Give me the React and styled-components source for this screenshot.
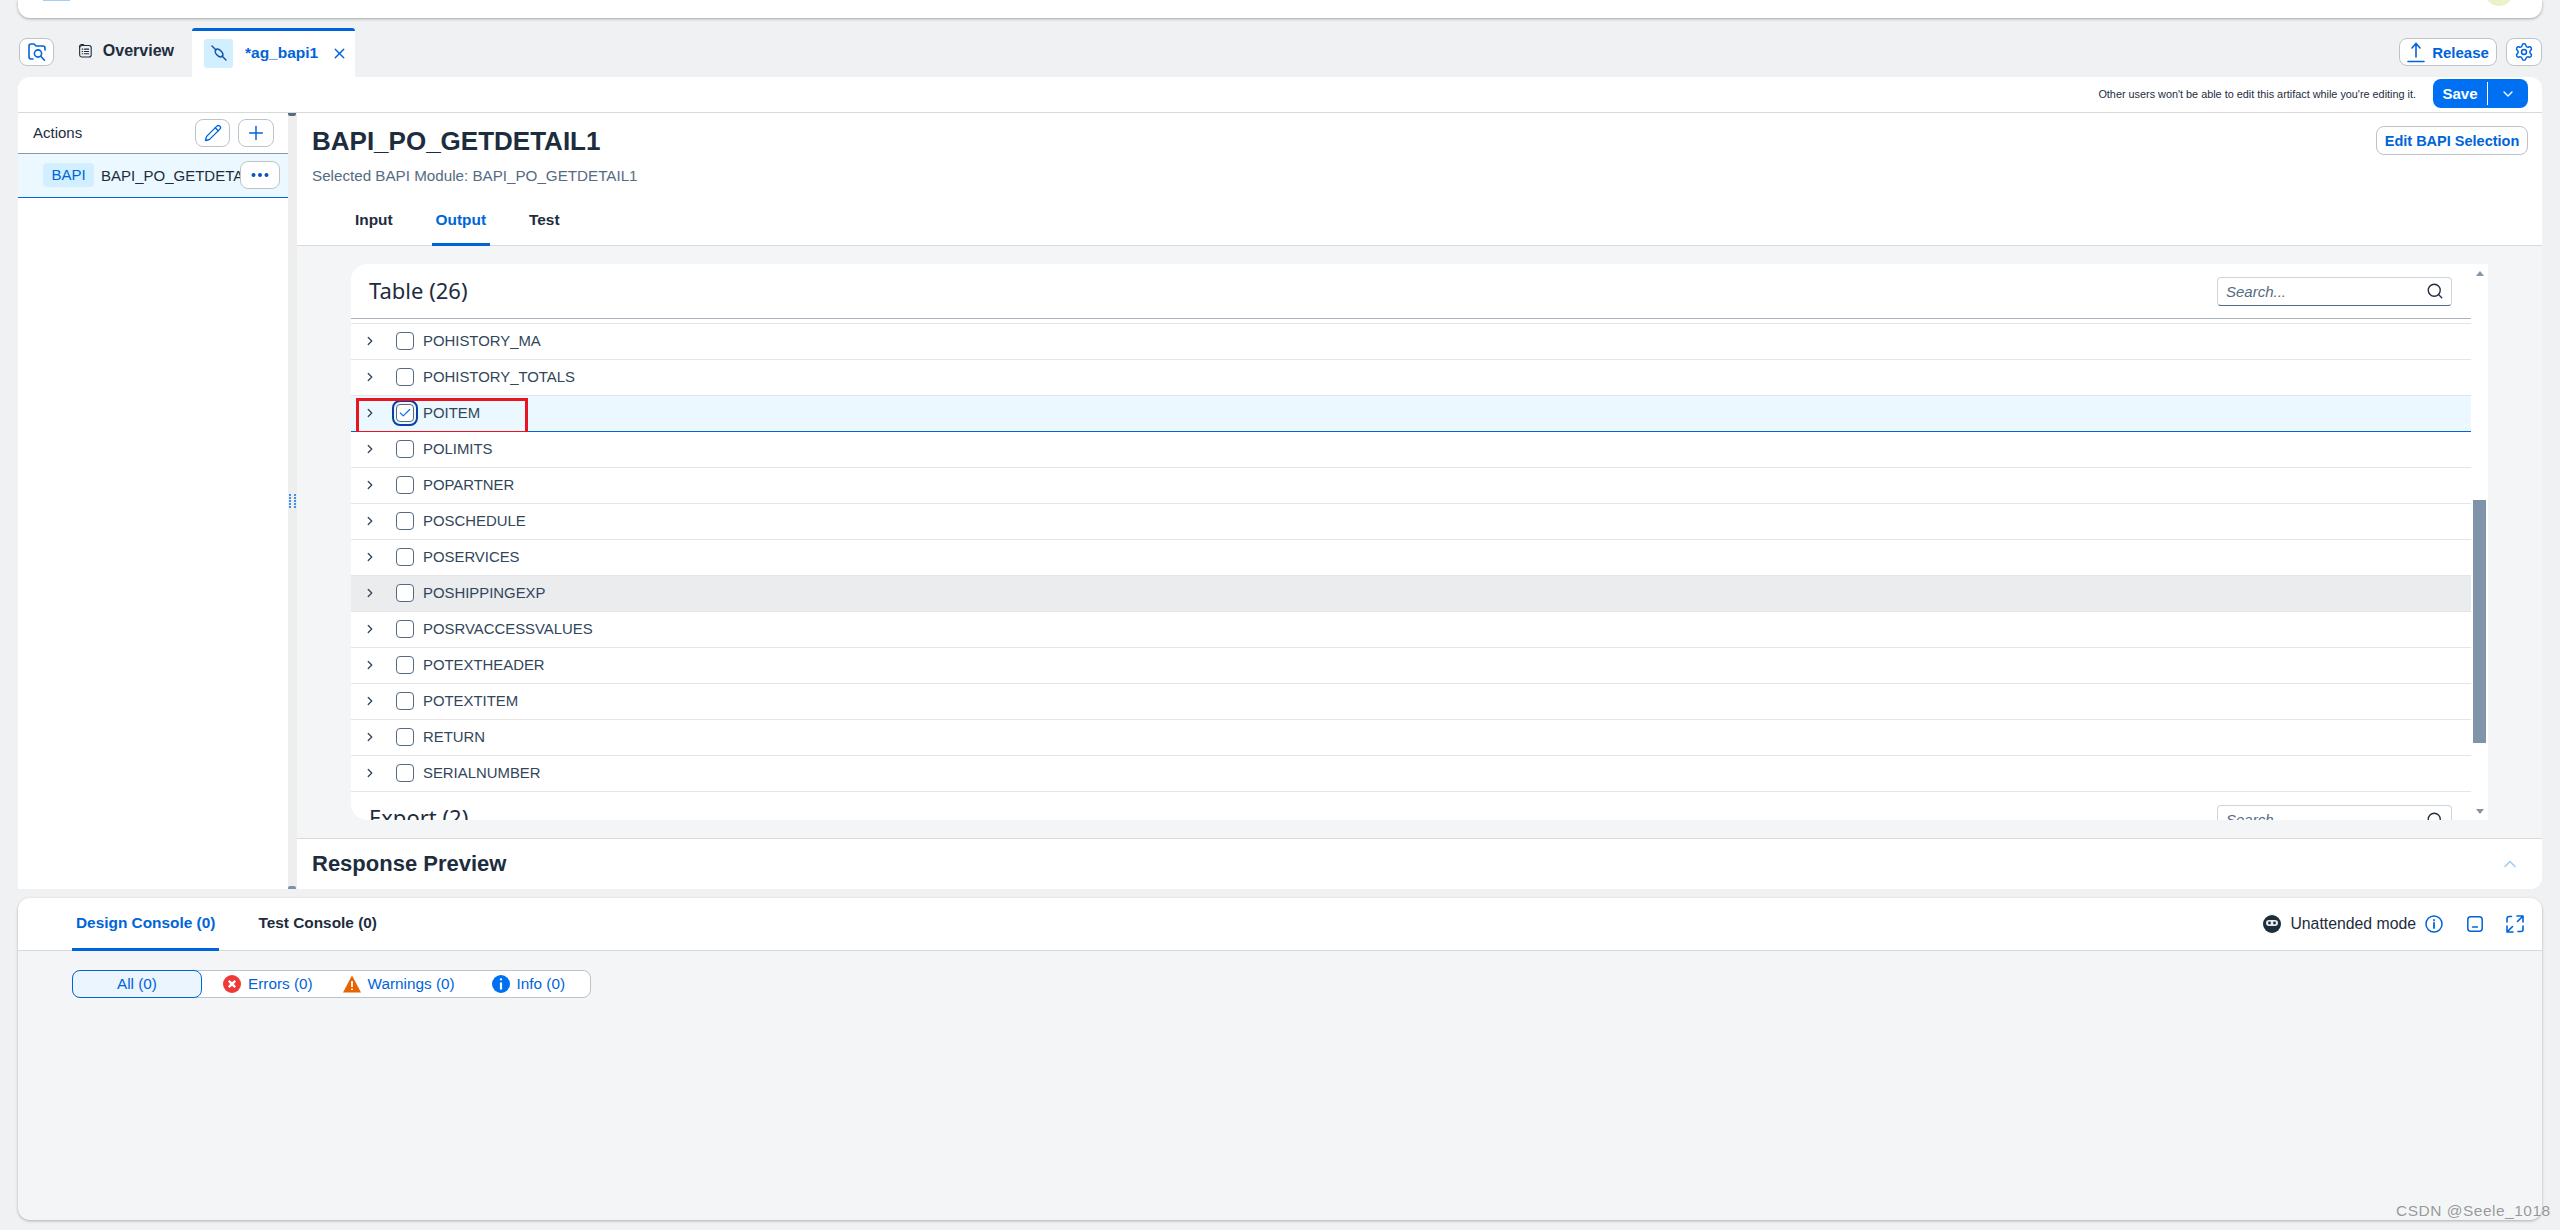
import React from 'react';
import styled, { createGlobalStyle } from 'styled-components';
import { ChevronDown, ChevronRight, ChevronUp, Check, Pencil, Plus, Search, Settings, X } from 'lucide-react';

const GlobalStyle = createGlobalStyle`
  html, body {
    margin: 0;
    padding: 0;
    overflow: hidden;
    background: #eff1f2;
  }
  * {
    box-sizing: border-box;
  }
`;

const Page = styled.div`
  position: relative;
  display: flex;
  flex-direction: column;
  width: 2560px;
  height: 1230px;
  padding: 0 18px;
  font-family: "Liberation Sans", Arial, sans-serif;
  color: #1d2d3e;
`;

const Shell = styled.div`
  position: relative;
  flex: none;
  height: 18px;
  background: #fff;
  border-radius: 0 0 12px 12px;
  box-shadow: 0 1px 3px rgba(0, 0, 0, 0.32);
  overflow: hidden;
`;

const ShellLogo = styled.div`
  position: absolute;
  left: 25px;
  top: 0;
  width: 27px;
  height: 1px;
  background: #a8cdf0;
`;

const ShellAvatar = styled.div`
  position: absolute;
  left: 2467px;
  top: -22px;
  width: 28px;
  height: 28px;
  border-radius: 50%;
  background: #eaf3c8;
`;

const TabRow = styled.div`
  flex: none;
  display: flex;
  align-items: flex-end;
  height: 59px;
  padding-left: 1px;
`;

const IconButton = styled.button`
  display: flex;
  align-items: center;
  justify-content: center;
  gap: ${(p) => (p.$gap ? `${p.$gap}px` : '0')};
  width: ${(p) => (p.$width ? `${p.$width}px` : 'auto')};
  height: ${(p) => (p.$tall ? '29px' : '28px')};
  padding: 0;
  background: #fff;
  border: 1px solid #bcc3ca;
  border-radius: 8px;
  color: #0064d9;
  font: 700 ${(p) => p.$font || 15}px "Liberation Sans", Arial, sans-serif;
`;

const TabRowButton = styled(IconButton)`
  margin-bottom: 11px;
`;

const OverviewTab = styled.div`
  display: flex;
  align-items: center;
  gap: 11px;
  height: 28px;
  width: 95px;
  margin: 0 18px 12px 25px;
  font-size: 16px;
  font-weight: 700;
`;

const ActiveTab = styled.div`
  display: flex;
  align-items: center;
  width: 163px;
  height: 49px;
  padding: 0 0 2px 12px;
  background: #fff;
  border-top: 3px solid #0064d9;
  border-radius: 3px 3px 0 0;
  color: #0064d9;
  font-size: 15.5px;
  font-weight: 700;
`;

const TabTile = styled.div`
  display: flex;
  align-items: center;
  justify-content: center;
  width: 29px;
  height: 29px;
  margin-right: 12px;
  background: #d1efff;
  border-radius: 3px;
`;

const TabName = styled.span`
  width: 86px;
`;

const TabRowEnd = styled.div`
  display: flex;
  gap: 9px;
  margin-left: auto;
`;

const Main = styled.div`
  flex: none;
  display: flex;
  flex-direction: column;
  height: 812px;
  background: #fff;
  border-radius: 12px 12px 12px 0;
  overflow: hidden;
`;

const Toolbar = styled.div`
  flex: none;
  display: flex;
  align-items: center;
  justify-content: flex-end;
  height: 36px;
  padding: 0 14px 2px 0;
  border-bottom: 1px solid #d9d9d9;
`;

const LockNote = styled.span`
  margin-right: 17px;
  font-size: 10.85px;
  color: #1d2d3e;
`;

const SaveButton = styled.div`
  display: flex;
  align-items: center;
  width: 95px;
  height: 29px;
  background: #0070f2;
  border-radius: 8px;
  color: #fff;
  font-size: 15px;
  font-weight: 700;
`;

const SaveLabel = styled.span`
  width: 55px;
  height: 23px;
  line-height: 23px;
  text-align: center;
  border-right: 1px solid #fff;
`;

const SaveCaret = styled.span`
  display: flex;
  flex: 1;
  justify-content: center;
`;

const Body = styled.div`
  flex: 1;
  display: flex;
  min-height: 0;
`;

const ActionsPanel = styled.div`
  flex: none;
  width: 270px;
`;

const ActionsHead = styled.div`
  display: flex;
  align-items: center;
  gap: 8px;
  height: 41px;
  padding: 0 14px 1px 15px;
  border-bottom: 1px solid #8b9aa9;
  font-size: 15px;
`;

const ActionsTitle = styled.span`
  margin-right: auto;
`;

const ActionItem = styled.div`
  position: relative;
  display: flex;
  align-items: center;
  height: 44px;
  padding: 0 0 1px 25px;
  background: #ebf8ff;
  border-bottom: 1px solid #0064d9;
  font-size: 15px;
  white-space: nowrap;
  overflow: hidden;
`;

const BapiTag = styled.span`
  flex: none;
  width: 51px;
  height: 24px;
  margin-right: 7px;
  line-height: 24px;
  text-align: center;
  background: #d1efff;
  border-radius: 4px;
  color: #0064d9;
`;

const MoreButton = styled(IconButton)`
  position: absolute;
  left: 222px;
  top: 7px;
  width: 40px;
`;

const Splitter = styled.div`
  position: relative;
  flex: none;
  display: flex;
  align-items: center;
  justify-content: center;
  width: 9px;
  background: #eeeeee;
`;

const SplitterCap = styled.div`
  position: absolute;
  left: 0;
  width: 8px;
  height: 3px;
  top: ${(p) => (p.$bottom ? 'auto' : '0')};
  bottom: ${(p) => (p.$bottom ? '0' : 'auto')};
  background: ${(p) => (p.$bottom ? '#7f90a8' : '#556b82')};
  border-radius: ${(p) => (p.$bottom ? '2px 2px 0 0' : '0 0 2px 2px')};
`;

const Workspace = styled.div`
  flex: 1;
  display: flex;
  flex-direction: column;
  min-width: 0;
`;

const DetailHead = styled.div`
  flex: none;
  display: flex;
  flex-direction: column;
  height: 133px;
  border-bottom: 1px solid #d9d9d9;
`;

const DetailTop = styled.div`
  display: flex;
  justify-content: space-between;
  align-items: flex-start;
  padding: 13px 14px 0 15px;
`;

const DetailTitle = styled.h1`
  margin: 0;
  font-size: 26px;
  line-height: 30px;
  font-weight: 700;
`;

const DetailSub = styled.div`
  margin-top: 10px;
  font-size: 15.2px;
  line-height: 20px;
  color: #556b82;
`;

const TabBar = styled.div`
  display: flex;
  gap: ${(p) => p.$gap}px;
  margin: auto 0 -1px 54px;
`;

const TabItem = styled.div`
  display: flex;
  align-items: center;
  height: ${(p) => p.$height}px;
  padding: 0 4px 2px;
  font-size: 15.4px;
  font-weight: 700;
  color: ${(p) => (p.$active ? '#0064d9' : '#1d2d3e')};
  border-bottom: 3px solid ${(p) => (p.$active ? '#0064d9' : 'transparent')};
`;

const Content = styled.div`
  flex: 1;
  display: flex;
  min-height: 0;
  padding: 18px 54px;
  background: #f3f5f6;
`;

const Card = styled.div`
  flex: 1;
  display: flex;
  min-width: 0;
  background: #fff;
  border-radius: 16px 0 0 16px;
  overflow: hidden;
`;

const CardList = styled.div`
  flex: 1;
  min-width: 0;
`;

const SectionHead = styled.div`
  display: flex;
  justify-content: space-between;
  height: ${(p) => (p.$first ? '55px' : '56px')};
  padding: ${(p) => (p.$first ? '0 19px 0 18px' : '13px 19px 0 18px')};
  align-items: ${(p) => (p.$first ? 'center' : 'flex-start')};
  border-bottom: ${(p) => (p.$first ? '1px solid #a9b4be' : 'none')};
`;

const SectionTitle = styled.span`
  font-family: "Noto Sans", sans-serif;
  font-size: 22px;
  margin-top: -3px;
`;

const SearchBox = styled.div`
  display: flex;
  align-items: center;
  justify-content: space-between;
  width: 235px;
  height: 29px;
  padding: 0 7px 0 8px;
  background: #fff;
  border: 1px solid #d0d5da;
  border-bottom: 1px solid #556b82;
  border-radius: 4px;
  font-size: 15px;
  font-style: italic;
  color: #556b82;
`;

const RowsTop = styled.div`
  height: 5px;
  border-bottom: 1px solid #e5e5e5;
`;

const Row = styled.div`
  position: relative;
  display: grid;
  grid-template-columns: 33px 27px 1fr;
  align-items: center;
  height: 36px;
  padding: 0 0 1px 12px;
  font-size: 14.9px;
  color: #32465a;
  background: ${(p) => (p.$selected ? '#ebf8ff' : p.$hover ? '#eaecee' : '#fff')};
  border-bottom: 1px solid ${(p) => (p.$selected ? '#0064d9' : '#e5e5e5')};
`;

const Checkbox = styled.span`
  position: relative;
  display: flex;
  align-items: center;
  justify-content: center;
  width: 18px;
  height: 18px;
  border: 1px solid #556b82;
  border-radius: 4px;
  background: #fff;
`;

const FocusRing = styled.span`
  position: absolute;
  left: -5px;
  top: -5px;
  width: 26px;
  height: 26px;
  border: 2px solid #0a3fa8;
  border-radius: 8px;
`;

const Highlight = styled.div`
  position: absolute;
  left: 5px;
  top: 2px;
  width: 172px;
  height: 36px;
  border: 3px solid #e8141f;
`;

const ScrollTrack = styled.div`
  flex: none;
  display: flex;
  flex-direction: column;
  align-items: center;
  width: 17px;
  padding: 7px 0 6px;
`;

const ScrollThumb = styled.div`
  width: 13px;
  height: 243px;
  margin-top: 224px;
  margin-bottom: auto;
  background: #7f93a9;
`;

const ArrowUp = styled.div`
  width: 0;
  height: 0;
  border-left: 4px solid transparent;
  border-right: 4px solid transparent;
  border-bottom: 5px solid #8396a8;
`;

const ArrowDown = styled(ArrowUp)`
  border-bottom: none;
  border-top: 5px solid #8396a8;
`;

const PreviewBar = styled.div`
  flex: none;
  display: flex;
  align-items: center;
  justify-content: space-between;
  height: 51px;
  padding: 0 22px 0 15px;
  background: #fff;
  border-top: 1px solid #d9d9d9;
`;

const PreviewTitle = styled.span`
  font-size: 22px;
  font-weight: 700;
`;

const Console = styled.div`
  flex: none;
  display: flex;
  flex-direction: column;
  height: 322px;
  margin-top: 9px;
  background: #f3f5f6;
  border-radius: 12px;
  box-shadow: 0 1px 3px rgba(0, 0, 0, 0.28);
  overflow: hidden;
`;

const ConsoleHead = styled.div`
  flex: none;
  display: flex;
  align-items: center;
  justify-content: space-between;
  height: 53px;
  padding-right: 18px;
  background: #fff;
  border-bottom: 1px solid #d9d9d9;
`;

const ConsoleTools = styled.div`
  display: flex;
  align-items: center;
  font-size: 15.8px;
`;

const ModeLabel = styled.span`
  margin: 0 9px;
`;

const MinIcon = styled.span`
  display: flex;
  margin: 0 23px 0 24px;
`;

const Segmented = styled.div`
  display: flex;
  align-items: center;
  width: 519px;
  height: 28px;
  margin: 19px 0 0 54px;
  background: #fff;
  border: 1px solid #bcc3ca;
  border-radius: 8px;
  color: #0064d9;
  font-size: 15.3px;
`;

const SegmentAll = styled.div`
  width: 130px;
  height: 28px;
  margin: -1px 0 -1px -1px;
  line-height: 26px;
  text-align: center;
  background: #ebf5fe;
  border: 1px solid #0064d9;
  border-radius: 8px;
`;

const SegmentItem = styled.div`
  display: flex;
  align-items: center;
  gap: 7px;
  margin-left: ${(p) => p.$left}px;
`;

const Watermark = styled.div`
  position: absolute;
  left: 2396px;
  top: 1202px;
  font-size: 15.5px;
  letter-spacing: 0.5px;
  color: rgba(90, 90, 90, 0.6);
`;

const FolderSearchIcon = () => (
  <svg width="18" height="20" viewBox="0 0 18 20" fill="none" stroke="#0064d9" strokeWidth="1.6" strokeLinecap="round" strokeLinejoin="round">
    <path d="M5 17H3a2 2 0 0 1-2-2V4a2 2 0 0 1 2-2h3l2 2h7a2 2 0 0 1 2 2v2" />
    <circle cx="10" cy="11.5" r="3.6" />
    <path d="M12.8 14.3L16.5 18.2" />
  </svg>
);

const OverviewIcon = () => (
  <svg width="14" height="16" viewBox="0 0 14 16" fill="none" stroke="#1d2d3e" strokeWidth="1.2" strokeLinecap="round">
    <rect x="0.7" y="2" width="12.6" height="12.6" rx="2.5" />
    <path d="M0.7 4.5V3a2 2 0 0 1 2-2h2l1 1" />
    <path d="M3.5 6h.6M6 6h4.5M3.5 8.5h.6M6 8.5h4.5M3.5 11h.6M6 11h4.5" />
  </svg>
);

const ConnectorIcon = () => (
  <svg width="18" height="18" viewBox="0 0 18 18" fill="none" stroke="#0a4fa8" strokeWidth="1.4" strokeLinecap="round">
    <path d="M2 2L6 6M12 12L16 16" />
    <ellipse cx="9" cy="9" rx="4.6" ry="2.8" transform="rotate(45 9 9)" />
  </svg>
);

const ReleaseIcon = () => (
  <svg width="18" height="21" viewBox="0 0 18 21" fill="none" stroke="#0064d9" strokeWidth="1.6" strokeLinecap="round">
    <path d="M9 15V2M5 6l4-4.5 4 4.5M1 19.5h16" />
  </svg>
);

const DotsIcon = () => (
  <svg width="18" height="4" viewBox="0 0 18 4" fill="#0a55b8">
    <circle cx="2.5" cy="2" r="2" />
    <circle cx="9" cy="2" r="2" />
    <circle cx="15.5" cy="2" r="2" />
  </svg>
);

const GripIcon = () => (
  <svg width="7" height="14" viewBox="0 0 7 14" fill="#0070f2">
    {[1, 4, 7, 10, 13].map((y) => (
      <g key={y}>
        <circle cx="1" cy={y} r="1" />
        <circle cx="6" cy={y} r="1" />
      </g>
    ))}
  </svg>
);

const RobotIcon = () => (
  <svg width="18" height="18" viewBox="0 0 18 18">
    <circle cx="9" cy="9" r="9" fill="#1d2d3e" />
    <rect x="3" y="5" width="12" height="6" rx="3" fill="#e8eaec" />
    <circle cx="6.5" cy="8" r="1.4" fill="#1d2d3e" />
    <circle cx="11.5" cy="8" r="1.4" fill="#1d2d3e" />
  </svg>
);

const InfoOutline = () => (
  <svg width="18" height="18" viewBox="0 0 18 18" fill="none" stroke="#0064d9" strokeWidth="1.5" strokeLinecap="round">
    <circle cx="9" cy="9" r="8" />
    <path d="M9 8v5M9 5v.4" strokeWidth="1.8" />
  </svg>
);

const MinimizeIcon = () => (
  <svg width="16" height="16" viewBox="0 0 16 16" fill="none" stroke="#0064d9" strokeWidth="1.5" strokeLinecap="round">
    <rect x="0.8" y="0.8" width="14.4" height="14.4" rx="3" />
    <path d="M5.5 11h5" />
  </svg>
);

const ExpandIcon = () => (
  <svg width="18" height="18" viewBox="0 0 18 18" fill="none" stroke="#0064d9" strokeWidth="1.6" strokeLinecap="round" strokeLinejoin="round">
    <path d="M1 7V3.5A2 2 0 0 1 3 1.5h2.5M12 16.5h3a2 2 0 0 0 2-2V11" />
    <path d="M11 1h6v6M17 1l-5.5 5.5M7 17H1v-6M1 17l5.5-5.5" />
  </svg>
);

const ErrorIcon = () => (
  <svg width="18" height="18" viewBox="0 0 18 18">
    <circle cx="9" cy="9" r="9" fill="#ee3939" />
    <path d="M5.8 5.8l6.4 6.4M12.2 5.8l-6.4 6.4" stroke="#fff" strokeWidth="2.4" />
  </svg>
);

const WarningIcon = () => (
  <svg width="18" height="18" viewBox="0 0 18 18">
    <path d="M9 .5L18 17.5H0z" fill="#e76500" />
    <path d="M9 6v6M9 13.5v1.6" stroke="#fff" strokeWidth="1.8" />
  </svg>
);

const InfoSolid = () => (
  <svg width="18" height="18" viewBox="0 0 18 18">
    <circle cx="9" cy="9" r="9" fill="#0070f2" />
    <path d="M9 7.5v7M9 3.5v1.8" stroke="#fff" strokeWidth="2.2" />
  </svg>
);

const tableRows = [
  { name: 'POHISTORY_MA' },
  { name: 'POHISTORY_TOTALS' },
  { name: 'POITEM', selected: true },
  { name: 'POLIMITS' },
  { name: 'POPARTNER' },
  { name: 'POSCHEDULE' },
  { name: 'POSERVICES' },
  { name: 'POSHIPPINGEXP', hover: true },
  { name: 'POSRVACCESSVALUES' },
  { name: 'POTEXTHEADER' },
  { name: 'POTEXTITEM' },
  { name: 'RETURN' },
  { name: 'SERIALNUMBER' },
];

const App = () => (
  <Page>
    <GlobalStyle />
    <Shell>
      <ShellLogo />
      <ShellAvatar />
    </Shell>
    <TabRow>
      <TabRowButton $width={35}><FolderSearchIcon /></TabRowButton>
      <OverviewTab><OverviewIcon />Overview</OverviewTab>
      <ActiveTab>
        <TabTile><ConnectorIcon /></TabTile>
        <TabName>*ag_bapi1</TabName>
        <X size={17} strokeWidth={2} />
      </ActiveTab>
      <TabRowEnd>
        <TabRowButton $width={98} $gap={7}><ReleaseIcon />Release</TabRowButton>
        <TabRowButton $width={36}><Settings size={20} strokeWidth={1.8} /></TabRowButton>
      </TabRowEnd>
    </TabRow>
    <Main>
      <Toolbar>
        <LockNote>Other users won't be able to edit this artifact while you're editing it.</LockNote>
        <SaveButton>
          <SaveLabel>Save</SaveLabel>
          <SaveCaret><ChevronDown size={16} strokeWidth={2} /></SaveCaret>
        </SaveButton>
      </Toolbar>
      <Body>
        <ActionsPanel>
          <ActionsHead>
            <ActionsTitle>Actions</ActionsTitle>
            <IconButton $width={35}><Pencil size={18} strokeWidth={1.8} /></IconButton>
            <IconButton $width={36}><Plus size={22} strokeWidth={1.6} /></IconButton>
          </ActionsHead>
          <ActionItem>
            <BapiTag>BAPI</BapiTag>
            BAPI_PO_GETDETAIL1
            <MoreButton><DotsIcon /></MoreButton>
          </ActionItem>
        </ActionsPanel>
        <Splitter>
          <SplitterCap />
          <GripIcon />
          <SplitterCap $bottom />
        </Splitter>
        <Workspace>
          <DetailHead>
            <DetailTop>
              <div>
                <DetailTitle>BAPI_PO_GETDETAIL1</DetailTitle>
                <DetailSub>Selected BAPI Module: BAPI_PO_GETDETAIL1</DetailSub>
              </div>
              <IconButton $width={152} $tall $font={14.5}>Edit BAPI Selection</IconButton>
            </DetailTop>
            <TabBar $gap={35}>
              <TabItem $height={47}>Input</TabItem>
              <TabItem $height={47} $active>Output</TabItem>
              <TabItem $height={47}>Test</TabItem>
            </TabBar>
          </DetailHead>
          <Content>
            <Card>
              <CardList>
                <SectionHead $first>
                  <SectionTitle>Table (26)</SectionTitle>
                  <SearchBox>Search...<Search size={18} color="#1d2d3e" strokeWidth={1.8} /></SearchBox>
                </SectionHead>
                <RowsTop />
                {tableRows.map((row) => (
                  <Row key={row.name} $selected={row.selected} $hover={row.hover}>
                    <ChevronRight size={14} strokeWidth={2.2} color="#32465a" />
                    <Checkbox>
                      {row.selected && <FocusRing />}
                      {row.selected && <Check size={14} color="#0070f2" strokeWidth={2} />}
                    </Checkbox>
                    <span>{row.name}</span>
                    {row.selected && <Highlight />}
                  </Row>
                ))}
                <SectionHead>
                  <SectionTitle>Export (2)</SectionTitle>
                  <SearchBox>Search...<Search size={18} color="#1d2d3e" strokeWidth={1.8} /></SearchBox>
                </SectionHead>
              </CardList>
              <ScrollTrack>
                <ArrowUp />
                <ScrollThumb />
                <ArrowDown />
              </ScrollTrack>
            </Card>
          </Content>
          <PreviewBar>
            <PreviewTitle>Response Preview</PreviewTitle>
            <ChevronUp size={20} strokeWidth={1.6} color="#9cc5f2" />
          </PreviewBar>
        </Workspace>
      </Body>
    </Main>
    <Console>
      <ConsoleHead>
        <TabBar $gap={35}>
          <TabItem $height={52} $active>Design Console (0)</TabItem>
          <TabItem $height={52}>Test Console (0)</TabItem>
        </TabBar>
        <ConsoleTools>
          <RobotIcon />
          <ModeLabel>Unattended mode</ModeLabel>
          <InfoOutline />
          <MinIcon><MinimizeIcon /></MinIcon>
          <ExpandIcon />
        </ConsoleTools>
      </ConsoleHead>
      <Segmented>
        <SegmentAll>All (0)</SegmentAll>
        <SegmentItem $left={21}><ErrorIcon />Errors (0)</SegmentItem>
        <SegmentItem $left={30}><WarningIcon />Warnings (0)</SegmentItem>
        <SegmentItem $left={37}><InfoSolid />Info (0)</SegmentItem>
      </Segmented>
    </Console>
    <Watermark>CSDN @Seele_1018</Watermark>
  </Page>
);

export default App;
